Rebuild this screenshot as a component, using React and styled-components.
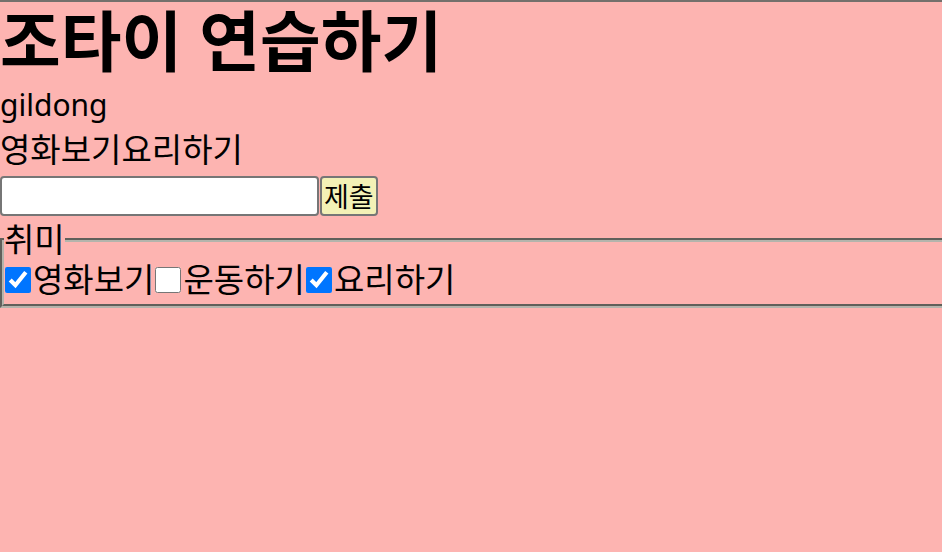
import React, { useState } from 'react';
import styled, { createGlobalStyle } from 'styled-components';

const GlobalStyle = createGlobalStyle`
  * {
    margin: 0;
    padding: 0;
    box-sizing: border-box;
  }
  html, body {
    background-color: #fdb4b1;
    overflow: hidden;
  }
  body {
    min-height: 100vh;
    border-top: 2px solid #74706c;
    font-family: "Noto Sans", "Noto Sans CJK KR", sans-serif;
    font-size: 33px;
    color: #000;
  }
`

const Wrapper = styled.div`
  display: flex;
  flex-direction: column;
  align-items: flex-start;
`

const Title = styled.h1`
  align-self: stretch;
  font-size: 66px;
  font-weight: 700;
  line-height: 76px;
  margin-bottom: 4px;
`

// latin text sits a little smaller than the hangul lines
const Line = styled.div`
  font-size: ${p => (p.$latin ? '30px' : '33px')};
  line-height: 45px;
`

const Form = styled.form`
  display: flex;
  align-items: flex-start;
  margin-top: 4px;
`

const Input = styled.input`
  width: 319px;
  height: 40px;
  border: 2px solid #767676;
  border-radius: 4px;
  background: #fff;
  font-family: inherit;
  font-size: 25px;
  padding: 0 4px;
  outline: none;
`

const SubmitButton = styled.button`
  height: 40px;
  margin-left: 1px;
  padding: 0 2px;
  border: 2px solid #767676;
  border-radius: 4px;
  background-color: #f3f1b6;
  font-family: "Noto Sans CJK KR", sans-serif;
  font-size: 27px;
  line-height: 36px;
  color: #000;
`

const Fieldset = styled.fieldset`
  align-self: stretch;
  margin-top: 2px;
  margin-right: -10px;
  border: 4px groove #b4b4ac;
  display: flex;
  align-items: center;
  padding-bottom: 6px;
`

const Legend = styled.legend`
  line-height: 44px;
  padding: 0;
`

const Item = styled.label`
  display: flex;
  align-items: center;
  line-height: 36px;
`

const Check = styled.input`
  width: 26px;
  height: 26px;
  margin: 0 2px 0 1px;
`

const hobbyList = ['영화보기', '운동하기', '요리하기'];

const App = () => {
  const [name] = useState('gildong');
  const [text, setText] = useState('');
  const [hobbies, setHobbies] = useState(['영화보기', '요리하기']);

  const toggle = (h) => {
    setHobbies(hobbies.includes(h) ? hobbies.filter(x => x !== h) : [...hobbies, h]);
  }

  return (
    <Wrapper>
      <GlobalStyle />
      <Title>조타이 연습하기</Title>
      <Line $latin>{name}</Line>
      <Line>{hobbyList.filter(h => hobbies.includes(h)).join('')}</Line>
      <Form onSubmit={e => e.preventDefault()}>
        <Input type="text" value={text} onChange={e => setText(e.target.value)} />
        <SubmitButton type="submit">제출</SubmitButton>
      </Form>
      <Fieldset>
        <Legend>취미</Legend>
        {hobbyList.map(h => (
          <Item key={h}>
            <Check type="checkbox" checked={hobbies.includes(h)} onChange={() => toggle(h)} />
            {h}
          </Item>
        ))}
      </Fieldset>
    </Wrapper>
  );
}

export default App;
